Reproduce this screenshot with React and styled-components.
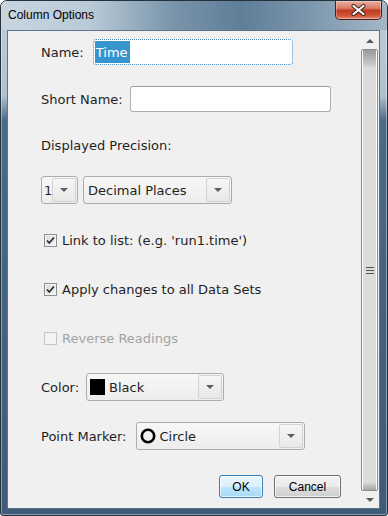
import styled, { createGlobalStyle } from "styled-components"

//#region styled
const GlobalStyle = createGlobalStyle`
  html, body {
    margin: 0;
    padding: 0;
    background: #fff;
    overflow: hidden;
  }
  body {
    font-family: "DejaVu Sans", "Liberation Sans", sans-serif;
    color: #1f1f24;
  }
`

const Window = styled.div`
  box-sizing: border-box;
  width: 388px;
  height: 516px;
  display: flex;
  flex-direction: column;
  border: 1px solid #24323e;
  border-radius: 7px 7px 3px 3px;
  background: linear-gradient(#bfcfdb 0, #aec1cf 95px, #4b6a86 120px, #3e5b77 100%);
  box-shadow: inset 0 0 0 1px rgba(255, 255, 255, 0.4);
  overflow: hidden;
`

const TitleBar = styled.div`
  flex: none;
  height: 29px;
  display: flex;
  align-items: flex-start;
  background: linear-gradient(
    to right,
    #c7d5e0 0,
    #b9cad7 90px,
    #7a95ab 170px,
    #5f7e98 240px,
    #7d97ad 310px,
    #a4b7c6 100%
  );
`

const Title = styled.span`
  font-family: "Liberation Sans", Arial, sans-serif;
  font-size: 12px;
  line-height: 29px;
  padding-left: 7px;
  color: #000;
`

const CloseButton = styled.div`
  margin-left: auto;
  margin-right: 5px;
  width: 47px;
  height: 19px;
  box-sizing: border-box;
  border: 1px solid #4b2019;
  border-top: none;
  border-radius: 0 0 5px 5px;
  background: linear-gradient(#eab0a2 0, #d97a64 40%, #c13b21 52%, #cf5638 82%, #e0907a 100%);
  box-shadow: inset 0 0 0 1px rgba(255, 255, 255, 0.3);
  display: flex;
  align-items: center;
  justify-content: center;
`

const Client = styled.div`
  flex: 1;
  min-height: 0;
  margin: 0 7px 6px 6px;
  border: 1px solid #5f7488;
  background: #f0f0f0;
  display: flex;
`

const Content = styled.div`
  flex: 1;
  display: flex;
  flex-direction: column;
  padding: 8px 20px 0 33px;
  font-size: 13px;
`

const Row = styled.div`
  display: flex;
  align-items: center;
  height: ${p => p.$h}px;
  margin-top: ${p => p.$gap || 0}px;
  justify-content: ${p => (p.$end ? "flex-end" : "flex-start")};
  gap: ${p => p.$spacing || 0}px;
`

const Label = styled.span`
  margin-right: ${p => p.$gap ?? 7}px;
  white-space: nowrap;
  color: ${p => (p.$disabled ? "#a3a3a3" : "#1f1f24")};
`

const TextInput = styled.div`
  box-sizing: border-box;
  width: ${p => p.$w}px;
  height: 100%;
  background: #fff;
  border: 1px ${p => (p.$focused ? "dotted #3f86bf" : "solid #abadb3")};
  border-top-color: ${p => (p.$focused ? "#3f86bf" : "#9a9ca3")};
  border-radius: 3px;
  display: flex;
  align-items: center;
  padding: 1px;
  font-size: 13px;
`

const Selected = styled.span`
  align-self: stretch;
  display: flex;
  align-items: center;
  padding: 0 2px 0 1px;
  background: #3795cd;
  color: #fff;
`

const Combo = styled.div`
  box-sizing: border-box;
  width: ${p => p.$w}px;
  height: 28px;
  border: 1px solid #acacac;
  border-radius: 3px;
  background: linear-gradient(#f7f7f7, #ededed);
  display: flex;
  align-items: center;
  padding: 1px;
  font-size: 13px;
`

const ComboText = styled.span`
  flex: 1;
  display: flex;
  align-items: center;
  gap: 4px;
  padding-left: ${p => p.$pl ?? 3}px;
  white-space: nowrap;
`

const DropButton = styled.div`
  align-self: stretch;
  width: 24px;
  box-sizing: border-box;
  border: 1px solid #d2d2d2;
  border-radius: 2px;
  background: linear-gradient(#f6f6f6, #e8e8e8);
  display: flex;
  align-items: center;
  justify-content: center;

  &::after {
    content: "";
    border-left: 4px solid transparent;
    border-right: 4px solid transparent;
    border-top: 4px solid #5c5c5c;
  }
`

const Swatch = styled.span`
  width: 15px;
  height: 16px;
  background: #000;
`

const CheckBox = styled.span`
  box-sizing: border-box;
  width: 13px;
  height: 13px;
  margin: 0 5px 0 3px;
  border: 1px solid ${p => (p.$disabled ? "#c6c6c6" : "#8e8f8f")};
  background: ${p =>
    p.$disabled ? "#f4f4f4" : "linear-gradient(135deg, #d9d9d9, #f7f7f7)"};
  box-shadow: inset 0 0 0 1px ${p => (p.$disabled ? "#f0f0f0" : "#f4f4f4")};
  display: flex;
  align-items: center;
  justify-content: center;
`

const Button = styled.div`
  box-sizing: border-box;
  width: ${p => p.$w}px;
  height: 23px;
  border: 1px solid ${p => (p.$default ? "#3c7fb1" : "#707070")};
  border-radius: 3px;
  background: ${p =>
    p.$default
      ? "linear-gradient(#eaf6fd 0, #d9f0fc 50%, #bee6fd 51%, #a7d9f5 100%)"
      : "linear-gradient(#f2f2f2 0, #ebebeb 50%, #dddddd 51%, #cfcfcf 100%)"};
  box-shadow: inset 0 0 0 1px rgba(255, 255, 255, 0.7);
  display: flex;
  align-items: center;
  justify-content: center;
  font-family: "Liberation Sans", Arial, sans-serif;
  font-size: 12px;
  color: #000;
`

const Scrollbar = styled.div`
  flex: none;
  width: 17px;
  margin: 1px 1px 0 0;
  display: flex;
  flex-direction: column;
  background: #e9e9e9;
`

const ArrowButton = styled.div`
  flex: none;
  height: 17px;
  background: #f0f0f0;
  display: flex;
  align-items: center;
  justify-content: center;

  &::after {
    content: "";
    border-left: 4px solid transparent;
    border-right: 4px solid transparent;
    ${p => (p.$down ? "border-top" : "border-bottom")}: 4px solid #5a5a5a;
  }
`

const Thumb = styled.div`
  flex: 1;
  box-sizing: border-box;
  border: 1px solid #8c8c8c;
  border-radius: 2px;
  background: linear-gradient(
    #999 0,
    #c7c7c7 14px,
    #dcdcdc 18px,
    #dcdcdc calc(100% - 8px),
    #a5a5a5 100%
  );
  box-shadow: inset 1px 0 #fff, inset -1px 0 #fff;
  display: flex;
  align-items: center;
  justify-content: center;
`

const Grip = styled.span`
  width: 8px;
  height: 7px;
  background: repeating-linear-gradient(#555 0, #555 1px, transparent 1px, transparent 3px);
`
//#endregion

const CheckMark = () => (
  <svg width="11" height="11" viewBox="0 0 11 11">
    <path d="M2 5.5 L4.3 8 L9 2.5" fill="none" stroke="#2e2e2e" strokeWidth="1.8" />
  </svg>
)

const CloseGlyph = () => (
  <svg width="15" height="12" viewBox="0 0 15 12">
    <path d="M2.5 2 L12.5 10 M12.5 2 L2.5 10" stroke="#3d1a12" strokeWidth="4" strokeLinecap="round" />
    <path d="M2.5 2 L12.5 10 M12.5 2 L2.5 10" stroke="#fff" strokeWidth="2.2" strokeLinecap="round" />
  </svg>
)

const CircleMarker = () => (
  <svg width="16" height="16" viewBox="0 0 16 16">
    <circle cx="8" cy="8" r="6.2" fill="none" stroke="#000" strokeWidth="2.6" />
  </svg>
)

const Check = ({ checked, disabled, children }) => (
  <>
    <CheckBox $disabled={disabled}>{checked && <CheckMark />}</CheckBox>
    <Label $disabled={disabled}>{children}</Label>
  </>
)

const App = () => (
  <>
    <GlobalStyle />
    <Window>
      <TitleBar>
        <Title>Column Options</Title>
        <CloseButton>
          <CloseGlyph />
        </CloseButton>
      </TitleBar>
      <Client>
        <Content>
          <Row $h={26}>
            <Label $gap={9}>Name:</Label>
            <TextInput $w={200} $focused>
              <Selected>Time</Selected>
            </TextInput>
          </Row>
          <Row $h={26} $gap={21}>
            <Label>Short Name:</Label>
            <TextInput $w={201} />
          </Row>
          <Row $h={20} $gap={23}>
            <Label>Displayed Precision:</Label>
          </Row>
          <Row $h={28} $gap={21} $spacing={5}>
            <Combo $w={37}>
              <ComboText $pl={1}>1</ComboText>
              <DropButton />
            </Combo>
            <Combo $w={149}>
              <ComboText>Decimal Places</ComboText>
              <DropButton />
            </Combo>
          </Row>
          <Row $h={20} $gap={26}>
            <Check checked>Link to list: (e.g. 'run1.time')</Check>
          </Row>
          <Row $h={20} $gap={29}>
            <Check checked>Apply changes to all Data Sets</Check>
          </Row>
          <Row $h={20} $gap={29}>
            <Check disabled>Reverse Readings</Check>
          </Row>
          <Row $h={28} $gap={25}>
            <Label>Color:</Label>
            <Combo $w={138}>
              <ComboText $pl={2}>
                <Swatch />
                Black
              </ComboText>
              <DropButton />
            </Combo>
          </Row>
          <Row $h={28} $gap={21}>
            <Label $gap={9}>Point Marker:</Label>
            <Combo $w={169}>
              <ComboText $pl={2}>
                <CircleMarker />
                Circle
              </ComboText>
              <DropButton />
            </Combo>
          </Row>
          <Row $h={23} $gap={25} $end $spacing={11}>
            <Button $w={44} $default>OK</Button>
            <Button $w={67}>Cancel</Button>
          </Row>
        </Content>
        <Scrollbar>
          <ArrowButton />
          <Thumb>
            <Grip />
          </Thumb>
          <ArrowButton $down />
        </Scrollbar>
      </Client>
    </Window>
  </>
)

export default App
